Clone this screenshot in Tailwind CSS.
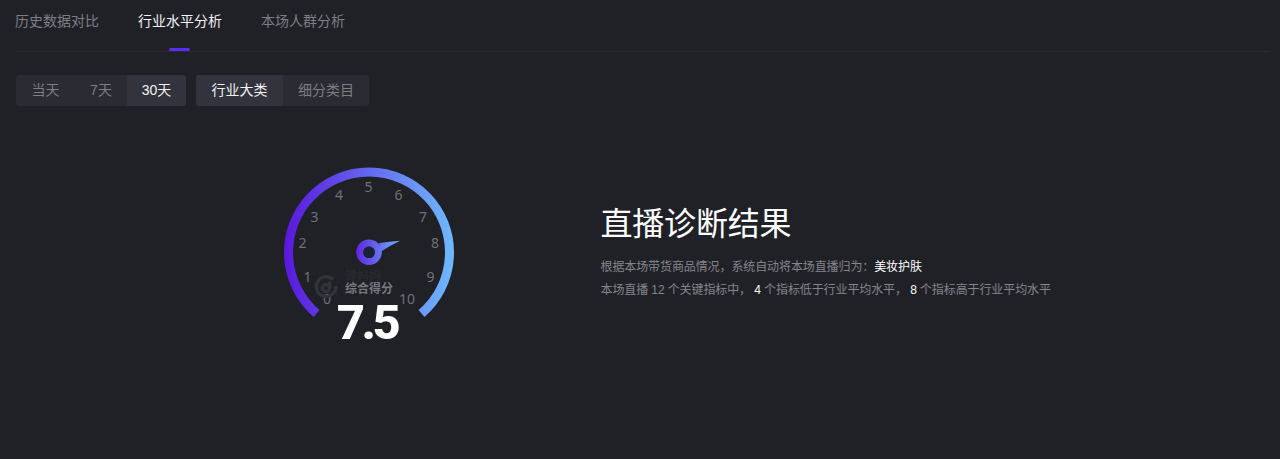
<!DOCTYPE html>
<html lang="zh">
<head>
<meta charset="utf-8">
<script src="https://cdn.jsdelivr.net/npm/@tailwindcss/browser@4"></script>
</head>
<body class="m-0 h-[459px] w-[1280px] overflow-hidden bg-[#202127] font-['Liberation_Sans','Noto_Sans_CJK_SC',sans-serif] text-[14px]">
<div class="ml-[15px] mr-[10px] flex h-[52px] gap-[39px] border-b border-[#2a2b31]">
  <div class="pt-[12px] leading-[18px] text-[#7e7e85]">历史数据对比</div>
  <div class="relative pt-[12px] leading-[18px] text-[#f2f2f4]">行业水平分析<span class="absolute bottom-[0px] left-[31px] h-[3px] w-[21px] rounded-[2px] bg-[#5b2cf5]"></span></div>
  <div class="pt-[12px] leading-[18px] text-[#7e7e85]">本场人群分析</div>
</div>
<div class="ml-[16px] mt-[23px] flex gap-[10px]">
  <div class="flex h-[31px] overflow-hidden rounded-[3px] bg-[#2a2b33] leading-[31px]">
    <div class="w-[59px] text-center text-[#7e7e85]">当天</div>
    <div class="w-[52px] text-center text-[#7e7e85]">7天</div>
    <div class="w-[59px] bg-[#32333d] text-center text-[#f2f2f4]">30天</div>
  </div>
  <div class="flex h-[31px] overflow-hidden rounded-[3px] bg-[#2a2b33] leading-[31px]">
    <div class="w-[87px] bg-[#32333d] text-center text-[#f2f2f4]">行业大类</div>
    <div class="w-[86px] text-center text-[#7e7e85]">细分类目</div>
  </div>
</div>
<div class="mt-[55px] flex items-start">
  <svg class="ml-[269px] h-[190px] w-[200px] shrink-0" viewBox="269 161 200 190" xmlns="http://www.w3.org/2000/svg">
    <defs>
      <linearGradient id="arc" gradientUnits="userSpaceOnUse" x1="284" y1="0" x2="454" y2="0">
        <stop offset="0" stop-color="#5a17dc"/>
        <stop offset="1" stop-color="#6fb9ff"/>
      </linearGradient>
      <linearGradient id="hub" gradientUnits="userSpaceOnUse" x1="356" y1="0" x2="400" y2="0">
        <stop offset="0" stop-color="#5f25e0"/>
        <stop offset="1" stop-color="#6fb0ff"/>
      </linearGradient>
    </defs>
    <path d="M316.5 313.5A80.5 80.5 0 1 1 421.5 313.5" fill="none" stroke="url(#arc)" stroke-width="9"/>
    <g font-family="'Noto Sans',sans-serif" fill="#707077" font-size="14" text-anchor="middle">
      <text x="327" y="304">0</text>
      <text x="307.5" y="282">1</text>
      <text x="302.5" y="248">2</text>
      <text x="314.5" y="222">3</text>
      <text x="339" y="200">4</text>
      <text x="368.5" y="192">5</text>
      <text x="398.5" y="200">6</text>
      <text x="423" y="222">7</text>
      <text x="435" y="248">8</text>
      <text x="430.5" y="282">9</text>
      <text x="407" y="304">10</text>
    </g>
    <g fill="none" stroke="#323338" stroke-width="3.5">
      <path d="M333 279.5A9.8 9.8 0 1 0 336 286"/>
      <circle cx="326" cy="288" r="3.6"/>
      <path d="M329.6 288V281.5"/>
    </g>
    <text x="345" y="280" font-size="12" fill="#2b2c31" font-family="'Noto Sans CJK SC',sans-serif">蝉妈妈</text>
    <text x="369" y="293" text-anchor="middle" font-size="12" font-weight="700" fill="#77777e" font-family="'Noto Sans CJK SC',sans-serif">综合得分</text>
    <text x="367" y="339" text-anchor="middle" font-size="49" font-weight="800" letter-spacing="-3.5" fill="#ffffff" font-family="Roboto,sans-serif">7.5</text>
    <path d="M379 243Q390 241.5 400 240.7Q390 245.5 381 251.5Z" fill="url(#hub)"/>
    <circle cx="369" cy="252.3" r="9.3" fill="none" stroke="url(#hub)" stroke-width="7"/>
    <circle cx="369" cy="252.3" r="5.8" fill="#1a2238"/>
  </svg>
  <div class="ml-[131.5px] pt-[41px] text-[12px] leading-[23px] tracking-[-0.1px] text-[#85858d]">
    <h1 class="mb-[10px] text-[32px] font-normal leading-[44px] tracking-[-0.2px] text-white">直播诊断结果</h1>
    <p>根据本场带货商品情况，系统自动将本场直播归为：<span class="text-white">美妆护肤</span></p>
    <p>本场直播 12 个关键指标中， <span class="text-white">4</span> 个指标低于行业平均水平， <span class="text-white">8</span> 个指标高于行业平均水平</p>
  </div>
</div>
</body>
</html>
